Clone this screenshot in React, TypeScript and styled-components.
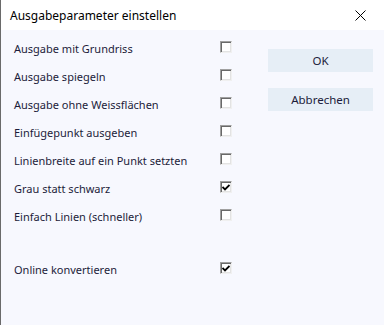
import styled, { createGlobalStyle } from "styled-components";

const GlobalStyle = createGlobalStyle`
  html, body {
    margin: 0;
    padding: 0;
    background: #f7f8fe;
  }
  * {
    box-sizing: border-box;
  }
`;

const Window = styled.div`
  width: 384px;
  height: 325px;
  display: flex;
  flex-direction: column;
  background: #f7f8fe;
  border-left: 1px solid #6a6a6a;
  font-family: "Noto Sans", "Open Sans", sans-serif;
  color: #1c1c3a;
  overflow: hidden;
`;

const TitleBar = styled.div`
  height: 30px;
  flex-shrink: 0;
  background: #ffffff;
  display: flex;
  align-items: center;
  justify-content: space-between;
  padding: 0 9px 0 9px;
`;

const Title = styled.span`
  font-size: 12px;
  color: #000000;
`;

const CloseButton = styled.div`
  width: 30px;
  height: 30px;
  display: flex;
  align-items: center;
  justify-content: center;
`;

const Body = styled.div`
  display: flex;
  padding: 3px 0 0 13px;
`;

const Options = styled.div`
  display: flex;
  flex-direction: column;
  width: 254px;
`;

const Row = styled.div`
  height: 28px;
  display: flex;
  align-items: center;
`;

const Spacer = styled.div`
  height: 25px;
`;

const Label = styled.span`
  width: 206px;
  font-size: 11px;
  padding-top: 2px;
`;

const Box = styled.div`
  width: 12px;
  height: 12px;
  background: #ffffff;
  border-top: 1px solid #a0a0a0;
  border-left: 1px solid #a0a0a0;
  border-right: 1px solid #f0f0f0;
  border-bottom: 1px solid #f0f0f0;
  box-shadow: inset 1px 1px 0 #696969, inset -1px -1px 0 #e3e3e3;
  display: flex;
  align-items: center;
  justify-content: center;
`;

const Buttons = styled.div`
  display: flex;
  flex-direction: column;
  gap: 16px;
  padding-top: 16px;
`;

const Button = styled.div`
  width: 105px;
  height: 23px;
  background: #e6eef6;
  display: flex;
  align-items: center;
  justify-content: center;
  font-size: 11.5px;
  color: #1c1c3a;
`;

const options: [string, boolean][] = [
  ["Ausgabe mit Grundriss", false],
  ["Ausgabe spiegeln", false],
  ["Ausgabe ohne Weissflächen", false],
  ["Einfügepunkt ausgeben", false],
  ["Linienbreite auf ein Punkt setzten", false],
  ["Grau statt schwarz", true],
  ["Einfach Linien (schneller)", false],
];

function Check({ checked }: { checked?: boolean }) {
  return (
    <Box>
      {checked && (
        <svg width="8" height="7" viewBox="0 0 8 7">
          <path d="M0.5 3 L3 5.5 L7.5 1" stroke="#000" strokeWidth="1.8" fill="none" />
        </svg>
      )}
    </Box>
  );
}

export default function App() {
  return (
    <>
      <GlobalStyle />
      <Window>
        <TitleBar>
          <Title>Ausgabeparameter einstellen</Title>
          <CloseButton>
            <svg width="11" height="11" viewBox="0 0 11 11">
              <path d="M0.5 0.5 L10.5 10.5 M10.5 0.5 L0.5 10.5" stroke="#000" strokeWidth="1" />
            </svg>
          </CloseButton>
        </TitleBar>
        <Body>
          <Options>
            {options.map(([label, checked]) => (
              <Row key={label}>
                <Label>{label}</Label>
                <Check checked={checked} />
              </Row>
            ))}
            <Spacer />
            <Row>
              <Label>Online konvertieren</Label>
              <Check checked />
            </Row>
          </Options>
          <Buttons>
            <Button>OK</Button>
            <Button>Abbrechen</Button>
          </Buttons>
        </Body>
      </Window>
    </>
  );
}
